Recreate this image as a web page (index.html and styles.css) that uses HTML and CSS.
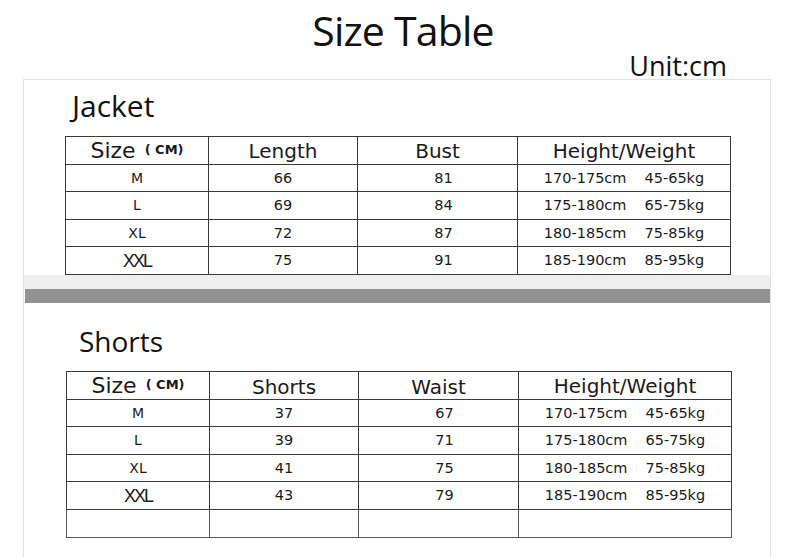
FILE: index.html
```html
<!DOCTYPE html>
<html lang="en">
<head>
<meta charset="utf-8">
<title>Size Table</title>
<link rel="stylesheet" href="styles.css">
</head>
<body>
<div class="page">
  <header class="header">
    <h1 class="title">Size Table</h1>
    <div class="unit">Unit:cm</div>
  </header>
  <main class="panel">
    <section class="section jacket">
      <h2 class="section-title">Jacket</h2>
      <table class="size-table">
        <colgroup><col class="c1"><col class="c2"><col class="c3"><col class="c4"></colgroup>
        <thead>
          <tr><th><span class="size-word">Size</span><span class="cm">(&nbsp;CM)</span></th><th>Length</th><th>Bust</th><th>Height/Weight</th></tr>
        </thead>
        <tbody>
          <tr><td class="sz">M</td><td>66</td><td class="shift">81</td><td><span>170-175cm</span><span class="wt">45-65kg</span></td></tr>
          <tr><td class="sz">L</td><td>69</td><td class="shift">84</td><td><span>175-180cm</span><span class="wt">65-75kg</span></td></tr>
          <tr><td class="sz">XL</td><td>72</td><td class="shift">87</td><td><span>180-185cm</span><span class="wt">75-85kg</span></td></tr>
          <tr><td class="sz xxl">XXL</td><td>75</td><td class="shift">91</td><td><span>185-190cm</span><span class="wt">85-95kg</span></td></tr>
        </tbody>
      </table>
    </section>
    <div class="band-light"></div>
    <div class="band-dark"></div>
    <section class="section shorts">
      <h2 class="section-title">Shorts</h2>
      <table class="size-table">
        <colgroup><col class="c1"><col class="c2"><col class="c3"><col class="c4"></colgroup>
        <thead>
          <tr><th><span class="size-word">Size</span><span class="cm">(&nbsp;CM)</span></th><th class="low">Shorts</th><th class="low">Waist</th><th>Height/Weight</th></tr>
        </thead>
        <tbody>
          <tr><td class="sz">M</td><td>37</td><td class="shift">67</td><td><span>170-175cm</span><span class="wt">45-65kg</span></td></tr>
          <tr><td class="sz">L</td><td>39</td><td class="shift">71</td><td><span>175-180cm</span><span class="wt">65-75kg</span></td></tr>
          <tr><td class="sz">XL</td><td>41</td><td class="shift">75</td><td><span>180-185cm</span><span class="wt">75-85kg</span></td></tr>
          <tr><td class="sz xxl">XXL</td><td>43</td><td class="shift">79</td><td><span>185-190cm</span><span class="wt">85-95kg</span></td></tr>
          <tr class="empty"><td></td><td></td><td></td><td></td></tr>
        </tbody>
      </table>
    </section>
  </main>
</div>
</body>
</html>
```
FILE: styles.css
```css
* { box-sizing: border-box; }

html, body {
  margin: 0;
  padding: 0;
  background: #ffffff;
}

body {
  font-family: "Open Sans", "Noto Sans", sans-serif;
  color: #111;
}

.page {
  width: 800px;
  height: 557px;
  overflow: hidden;
  display: flex;
  flex-direction: column;
}

.header {
  height: 79px;
  display: flex;
  flex-direction: column;
}

.title {
  margin: 0;
  padding: 10px 0 0 6px;
  font-size: 41px;
  line-height: 41px;
  font-weight: 400;
  letter-spacing: -0.8px;
  text-align: center;
  color: #111;
}

.unit {
  margin-top: 1px;
  padding-right: 73px;
  font-size: 27px;
  line-height: 27px;
  text-align: right;
  color: #111;
}

.panel {
  margin-left: 23px;
  width: 748px;
  flex: 1;
  border: 1px solid #e2e2e2;
  border-bottom: none;
  display: flex;
  flex-direction: column;
}

.section-title {
  margin: 0;
  font-weight: 400;
  color: #111;
}

.jacket {
  padding: 11px 0 0 0;
}

.jacket .section-title {
  padding-left: 48px;
  font-size: 30px;
  line-height: 30px;
}

.jacket .size-table {
  margin: 15px 0 0 41px;
}

.band-light {
  height: 14px;
  background: #efefef;
}

.band-dark {
  height: 14px;
  background: #929292;
  margin-left: 1px;
}

.shorts {
  padding-top: 24px;
}

.shorts .section-title {
  padding-left: 55px;
  font-size: 28px;
  line-height: 28px;
}

.shorts .size-table {
  margin: 16px 0 0 42px;
}

.size-table {
  border-collapse: collapse;
  table-layout: fixed;
  width: 665px;
  font-family: "DejaVu Sans", Verdana, sans-serif;
  color: #1a1a1a;
}

.c1 { width: 143px; }
.c2 { width: 149px; }
.c3 { width: 160px; }
.c4 { width: 213px; }

.size-table th,
.size-table td {
  border: 1px solid #3a3a3a;
  padding: 0;
  height: 27.6px;
  text-align: center;
  vertical-align: middle;
  line-height: 1;
  white-space: nowrap;
}

.size-table th {
  font-size: 20px;
  font-weight: 400;
  padding-top: 1px;
}

.size-table th.low {
  padding-top: 3px;
}

.size-word {
  font-size: 22px;
}

.cm {
  font-size: 13px;
  font-weight: 700;
  margin-left: 9px;
  position: relative;
  top: -4px;
}

.size-table td {
  font-size: 14.5px;
}

.size-table td.sz {
  font-size: 14px;
}

.size-table td.xxl {
  font-family: "Liberation Sans", Arial, sans-serif;
  font-size: 18px;
  letter-spacing: -2px;
}

.size-table td.shift {
  padding-left: 12px;
}

.wt {
  margin-left: 18px;
}

.empty td {
  border-color: #5a5a5a;
}
```
